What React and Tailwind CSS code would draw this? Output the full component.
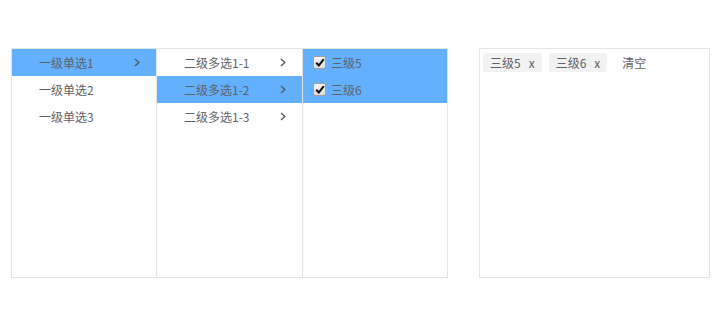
import React from "react";

const font = { fontFamily: '"Noto Sans CJK SC", "Noto Sans", sans-serif' };

function Chevron() {
  return (
    <svg width="6" height="9" viewBox="0 0 6 9" className="shrink-0">
      <path d="M1 1 L4.8 4.5 L1 8" fill="none" stroke="#555" strokeWidth="1.3" />
    </svg>
  );
}

function Check() {
  return (
    <span className="w-[13px] h-[13px] rounded-[2px] border border-[#a0a0a0] bg-gradient-to-b from-[#f6f6f6] to-[#dcdcdc] flex items-center justify-center shrink-0">
      <svg width="10" height="9" viewBox="0 0 10 9">
        <path d="M1.2 4.8 L3.8 7.4 L8.8 1.2" fill="none" stroke="#111" strokeWidth="2" />
      </svg>
    </span>
  );
}

function Row({ active, children, pl = "pl-[27px]", pr = "pr-[16px]" }) {
  return (
    <div className={`h-[27px] flex items-center justify-between ${pl} ${pr} ${active ? "bg-[#63b0ff]" : ""}`}>
      {children}
    </div>
  );
}

export default function App() {
  return (
    <div className="w-[720px] h-[328px] bg-white text-[12px] text-[#5f6166]" style={font}>
      <div className="flex pt-[48px] pl-[11px] gap-[31px]">
        <div className="flex h-[230px] border border-[#e4e4e4]">
          <div className="w-[145px] border-r border-[#e4e4e4]">
            <Row active><span>一级单选1</span><Chevron /></Row>
            <Row><span>一级单选2</span></Row>
            <Row><span>一级单选3</span></Row>
          </div>
          <div className="w-[146px] border-r border-[#e4e4e4]">
            <Row><span>二级多选1-1</span><Chevron /></Row>
            <Row active><span>二级多选1-2</span><Chevron /></Row>
            <Row><span>二级多选1-3</span><Chevron /></Row>
          </div>
          <div className="w-[144px]">
            <Row active pl="pl-[10px]"><span className="flex items-center gap-[5px]"><Check />三级5</span></Row>
            <Row active pl="pl-[10px]"><span className="flex items-center gap-[5px]"><Check />三级6</span></Row>
          </div>
        </div>
        <div className="w-[231px] h-[230px] border border-[#e4e4e4] pt-[4px] pl-[3px]">
          <div className="flex items-center gap-[7px]">
            <span className="h-[19px] flex items-center bg-[#f2f2f2] rounded-[3px] pl-[7px] pr-[7px] gap-[8px]">
              <span>三级5</span><span>x</span>
            </span>
            <span className="h-[19px] flex items-center bg-[#f2f2f2] rounded-[3px] pl-[7px] pr-[7px] gap-[8px]">
              <span>三级6</span><span>x</span>
            </span>
            <span className="ml-[8px]">清空</span>
          </div>
        </div>
      </div>
    </div>
  );
}
